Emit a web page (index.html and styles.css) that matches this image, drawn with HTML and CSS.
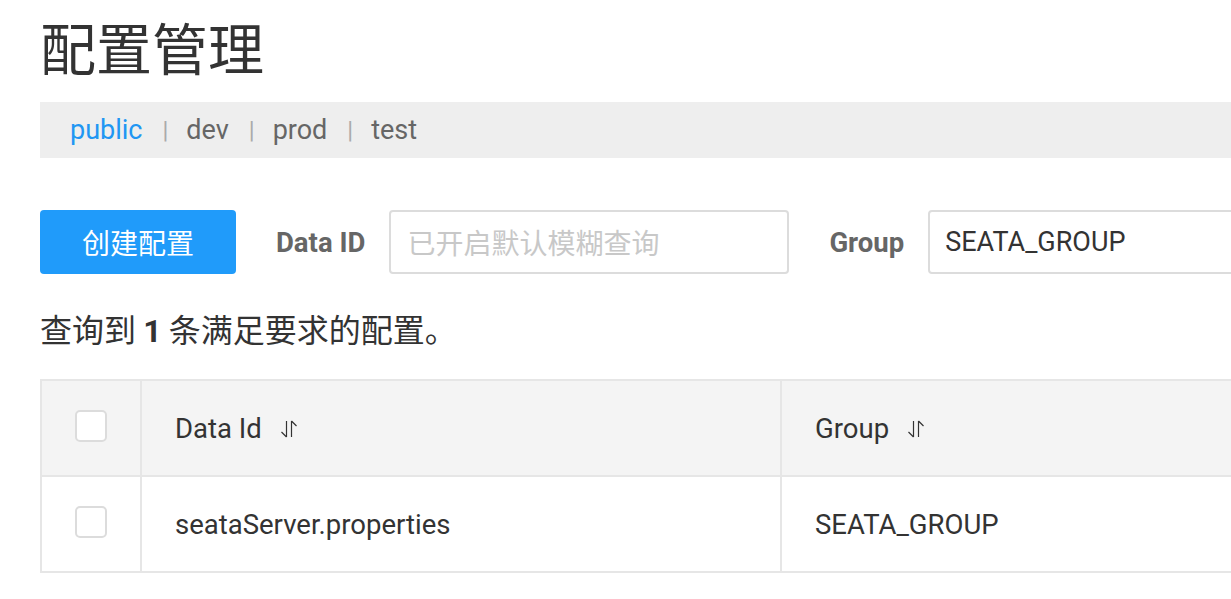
FILE: index.html
```html
<!DOCTYPE html>
<html lang="zh-CN">
<head>
<meta charset="utf-8">
<title>配置管理</title>
<link rel="stylesheet" href="styles.css">
</head>
<body>
<div class="page">
  <h1 class="title">配置管理</h1>
  <div class="ns-bar">
    <span class="ns active">public</span><span class="sep">|</span>
    <span class="ns">dev</span><span class="sep">|</span>
    <span class="ns">prod</span><span class="sep">|</span>
    <span class="ns">test</span>
  </div>
  <div class="toolbar">
    <button class="btn-primary">创建配置</button>
    <label class="field-label">Data ID</label>
    <div class="input"><span class="placeholder">已开启默认模糊查询</span></div>
    <label class="field-label">Group</label>
    <div class="input wide"><span class="value">SEATA_GROUP</span></div>
  </div>
  <p class="result">查询到 <b>1</b> 条满足要求的配置。</p>
  <div class="table">
    <div class="row head">
      <div class="cell check"><span class="checkbox"></span></div>
      <div class="cell c1">Data Id <svg class="sort" viewBox="0 0 16 18" width="16" height="18"><path d="M5.5 1v16M0.5 12l5 5M10.5 17V1M10.5 1l5 5" fill="none" stroke="#333" stroke-width="1.2"/></svg></div>
      <div class="cell c2">Group <svg class="sort" viewBox="0 0 16 18" width="16" height="18"><path d="M5.5 1v16M0.5 12l5 5M10.5 17V1M10.5 1l5 5" fill="none" stroke="#333" stroke-width="1.2"/></svg></div>
    </div>
    <div class="row">
      <div class="cell check"><span class="checkbox"></span></div>
      <div class="cell c1">seataServer.properties</div>
      <div class="cell c2">SEATA_GROUP</div>
    </div>
  </div>
</div>
</body>
</html>
```
FILE: styles.css
```css
html, body {
  margin: 0;
  padding: 0;
  background: #fff;
  overflow: hidden;
}
body {
  font-family: Roboto, "Noto Sans CJK SC", sans-serif;
  color: #333;
}
.page {
  padding-left: 40px;
  width: 1600px;
}
.title {
  margin: 0;
  padding-top: 11px;
  height: 102px;
  box-sizing: border-box;
  font-size: 56px;
  font-weight: 400;
  line-height: 70px;
  color: #333;
  font-family: "Noto Sans CJK SC", sans-serif;
}
.ns-bar {
  height: 56px;
  background: #eeeeee;
  display: flex;
  align-items: center;
  padding-left: 30px;
  font-size: 27px;
  color: #666;
}
.ns.active { color: #2196f3; }
.sep {
  color: #aaa;
  margin: 0 18px 0 20px;
  font-size: 24px;
}
.toolbar {
  margin-top: 52px;
  display: flex;
  align-items: center;
  height: 64px;
}
.btn-primary {
  width: 196px;
  height: 64px;
  border: none;
  border-radius: 4px;
  background: #209bfa;
  color: #fff;
  font-family: "Noto Sans CJK SC", sans-serif;
  font-size: 28px;
  padding: 0;
  margin-right: 40px;
}
.field-label {
  font-weight: 700;
  color: #666;
  font-size: 27.5px;
  margin-right: 24px;
}
.input {
  width: 380px;
  height: 60px;
  border: 2px solid #dcdcdc;
  border-radius: 4px;
  display: flex;
  align-items: center;
  padding-left: 16px;
  box-sizing: content-box;
  margin-right: 40px;
}
.input.wide { width: 500px; padding-left: 15px; }
.placeholder {
  color: #c8c8c8;
  font-family: "Noto Sans CJK SC", sans-serif;
  font-size: 28px;
}
.value {
  color: #333;
  font-size: 27px;
}
.result {
  margin: 32px 0 0;
  font-size: 32px;
  line-height: 44px;
  color: #333;
  font-family: "Noto Sans CJK SC", sans-serif;
}
.result b { font-family: Roboto, sans-serif; font-weight: 700; }
.table {
  margin-top: 26px;
  border-top: 2px solid #e6e6e6;
  border-left: 2px solid #e6e6e6;
  width: 1500px;
}
.row {
  display: flex;
  height: 96px;
  border-bottom: 2px solid #e6e6e6;
  box-sizing: border-box;
}
.row.head { background: #f4f4f4; }
.cell {
  display: flex;
  align-items: center;
  font-size: 27.5px;
  color: #333;
  border-right: 2px solid #e6e6e6;
  box-sizing: border-box;
}
.check { width: 100px; justify-content: center; }
.c1 { width: 640px; padding-left: 33px; }
.c2 { width: 700px; padding-left: 33px; }
.checkbox {
  width: 28px;
  height: 28px;
  border: 2px solid #dcdcdc;
  border-radius: 5px;
  background: #fff;
  margin-top: -4px;
}
.sort { margin-left: 19px; margin-top: 2px; }
```
